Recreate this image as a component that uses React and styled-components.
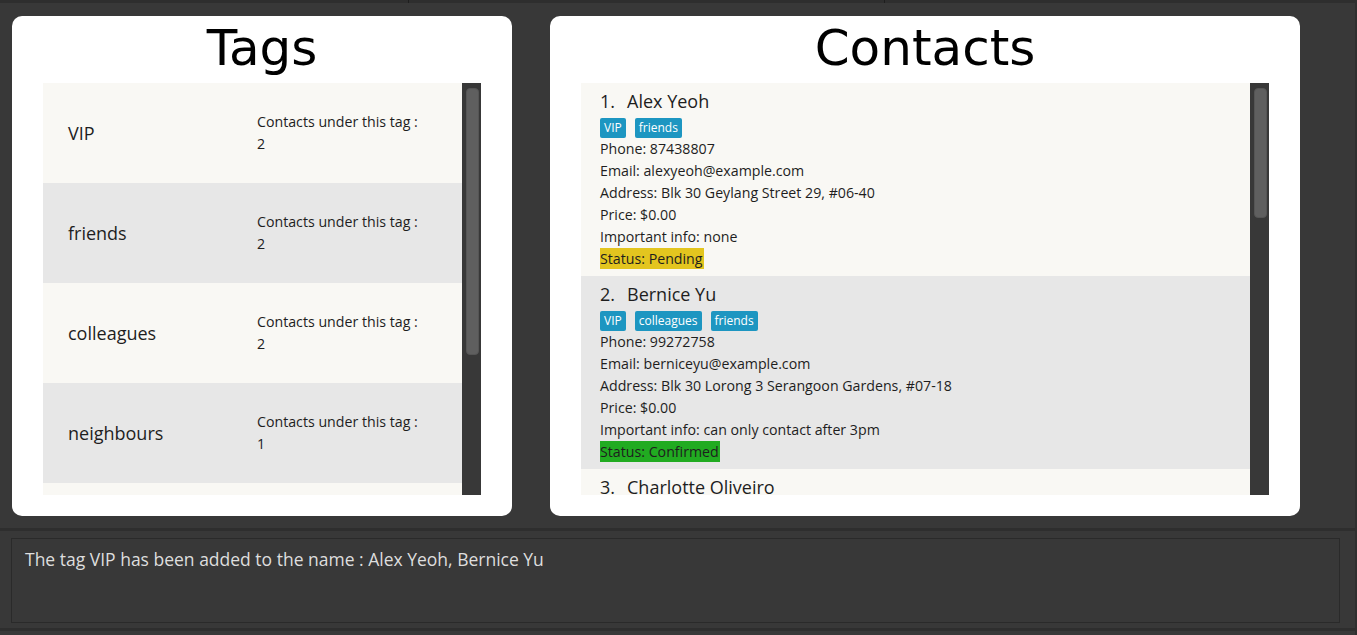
import React from 'react';
import styled, { createGlobalStyle } from 'styled-components';

const GlobalStyle = createGlobalStyle`
  html, body {
    margin: 0;
    padding: 0;
    background: #383838;
    overflow: hidden;
    font-family: 'Open Sans', 'Noto Sans', sans-serif;
  }
`;

const tagsData = [
  { name: 'VIP', count: 2 },
  { name: 'friends', count: 2 },
  { name: 'colleagues', count: 2 },
  { name: 'neighbours', count: 1 },
  { name: 'family', count: 1 },
];

const contactsData = [
  {
    name: 'Alex Yeoh',
    tags: ['VIP', 'friends'],
    phone: '87438807',
    email: 'alexyeoh@example.com',
    address: 'Blk 30 Geylang Street 29, #06-40',
    price: '$0.00',
    info: 'none',
    status: 'Pending',
  },
  {
    name: 'Bernice Yu',
    tags: ['VIP', 'colleagues', 'friends'],
    phone: '99272758',
    email: 'berniceyu@example.com',
    address: 'Blk 30 Lorong 3 Serangoon Gardens, #07-18',
    price: '$0.00',
    info: 'can only contact after 3pm',
    status: 'Confirmed',
  },
  {
    name: 'Charlotte Oliveiro',
    tags: ['neighbours'],
    phone: '93210283',
    email: 'charlotte@example.com',
    address: 'Blk 11 Ang Mo Kio Street 74, #11-04',
    price: '$0.00',
    info: 'none',
    status: 'Pending',
  },
];

const statusColors = {
  Pending: '#e3c51f',
  Confirmed: '#21ab21',
};

const Window = styled.div`
  width: 1357px;
  height: 635px;
  display: flex;
  flex-direction: column;
  background: #383838;
  border-right: 2px solid #2f2f2f;
  box-sizing: border-box;
`;

const TopBar = styled.div`
  height: 3px;
  flex-shrink: 0;
  display: flex;
  background: #2e2e2e;
`;

const TopSegment = styled.div`
  width: ${(p) => p.$width}px;
  border-right: 1px solid #1e1e1e;
`;

const Main = styled.div`
  height: 528px;
  flex-shrink: 0;
  display: flex;
  gap: 38px;
  padding: 13px 0 0 12px;
  box-sizing: border-box;
  border-bottom: 3px solid #2e2e2e;
`;

const Card = styled.section`
  width: ${(p) => p.$width}px;
  height: 500px;
  background: #ffffff;
  border-radius: 10px;
  padding: 0 31px 21px;
  box-sizing: border-box;
  display: flex;
  flex-direction: column;
`;

const CardTitle = styled.h1`
  margin: 0;
  height: 67px;
  line-height: 64px;
  font-family: 'DejaVu Sans', sans-serif;
  font-weight: normal;
  font-size: 50px;
  color: #000;
  text-align: center;
`;

const ListFrame = styled.div`
  flex: 1;
  display: flex;
  overflow: hidden;
`;

const ListBody = styled.div`
  flex: 1;
  overflow: hidden;
`;

const ScrollTrack = styled.div`
  width: 19px;
  background: #383838;
  padding: 5px 2px 0 4px;
  box-sizing: border-box;
`;

const ScrollThumb = styled.div`
  height: ${(p) => p.$height}px;
  background: #5f5f5f;
  border-radius: 4px;
  border: 1px solid #555;
  box-sizing: border-box;
`;

const TagRow = styled.div`
  height: 100px;
  display: grid;
  grid-template-columns: 214px 1fr;
  align-items: center;
  background: ${(p) => (p.$alt ? '#e7e7e7' : '#f9f8f4')};
  color: #1e1e1e;
`;

const TagName = styled.div`
  padding-left: 25px;
  font-size: 18px;
`;

const TagCount = styled.div`
  font-size: 14.2px;
  line-height: 22px;
`;

const ContactRow = styled.div`
  padding: 6px 0 6px 19px;
  background: ${(p) => (p.$alt ? '#e7e7e7' : '#f9f8f4')};
  color: #1e1e1e;
`;

const NameLine = styled.div`
  font-size: 18px;
  line-height: 25px;
  display: flex;
  gap: 12px;
`;

const ChipRow = styled.div`
  display: flex;
  gap: 9px;
  margin-top: 4px;
  height: 20px;
`;

const Chip = styled.span`
  background: #1d96c1;
  color: #fff;
  font-size: 12px;
  line-height: 20px;
  padding: 0 4px;
  border-radius: 2px;
`;

const Field = styled.div`
  font-size: 14.2px;
  line-height: 22px;
  white-space: nowrap;
`;

const Status = styled.span`
  display: inline-block;
  line-height: 21px;
  background: ${(p) => p.$color};
  padding-right: 1px;
`;

const ResultArea = styled.div`
  flex-shrink: 0;
  padding: 7px 15px 5px 11px;
  border-bottom: 3px solid #2e2e2e;
`;

const ResultBox = styled.div`
  height: 85px;
  box-sizing: border-box;
  border: 1px solid #2a2a2a;
  padding: 8px 13px;
  color: #dedede;
  font-size: 17.5px;
  line-height: 24px;
`;

function TagList() {
  return (
    <ListFrame>
      <ListBody>
        {tagsData.map((t, i) => (
          <TagRow key={t.name} $alt={i % 2 === 1}>
            <TagName>{t.name}</TagName>
            <TagCount>
              Contacts under this tag :
              <br />
              {t.count}
            </TagCount>
          </TagRow>
        ))}
      </ListBody>
      <ScrollTrack>
        <ScrollThumb $height={267} />
      </ScrollTrack>
    </ListFrame>
  );
}

function ContactList() {
  return (
    <ListFrame>
      <ListBody>
        {contactsData.map((c, i) => (
          <ContactRow key={c.name} $alt={i % 2 === 1}>
            <NameLine>
              <span>{i + 1}.</span>
              <span>{c.name}</span>
            </NameLine>
            <ChipRow>
              {c.tags.map((t) => (
                <Chip key={t}>{t}</Chip>
              ))}
            </ChipRow>
            <Field>Phone: {c.phone}</Field>
            <Field>Email: {c.email}</Field>
            <Field>Address: {c.address}</Field>
            <Field>Price: {c.price}</Field>
            <Field>Important info: {c.info}</Field>
            <Field>
              <Status $color={statusColors[c.status]}>Status: {c.status}</Status>
            </Field>
          </ContactRow>
        ))}
      </ListBody>
      <ScrollTrack>
        <ScrollThumb $height={130} />
      </ScrollTrack>
    </ListFrame>
  );
}

export default function App() {
  return (
    <Window>
      <GlobalStyle />
      <TopBar>
        <TopSegment $width={408} />
        <TopSegment $width={475} />
      </TopBar>
      <Main>
        <Card $width={500}>
          <CardTitle>Tags</CardTitle>
          <TagList />
        </Card>
        <Card $width={750}>
          <CardTitle>Contacts</CardTitle>
          <ContactList />
        </Card>
      </Main>
      <ResultArea>
        <ResultBox>The tag VIP has been added to the name : Alex Yeoh, Bernice Yu</ResultBox>
      </ResultArea>
    </Window>
  );
}
